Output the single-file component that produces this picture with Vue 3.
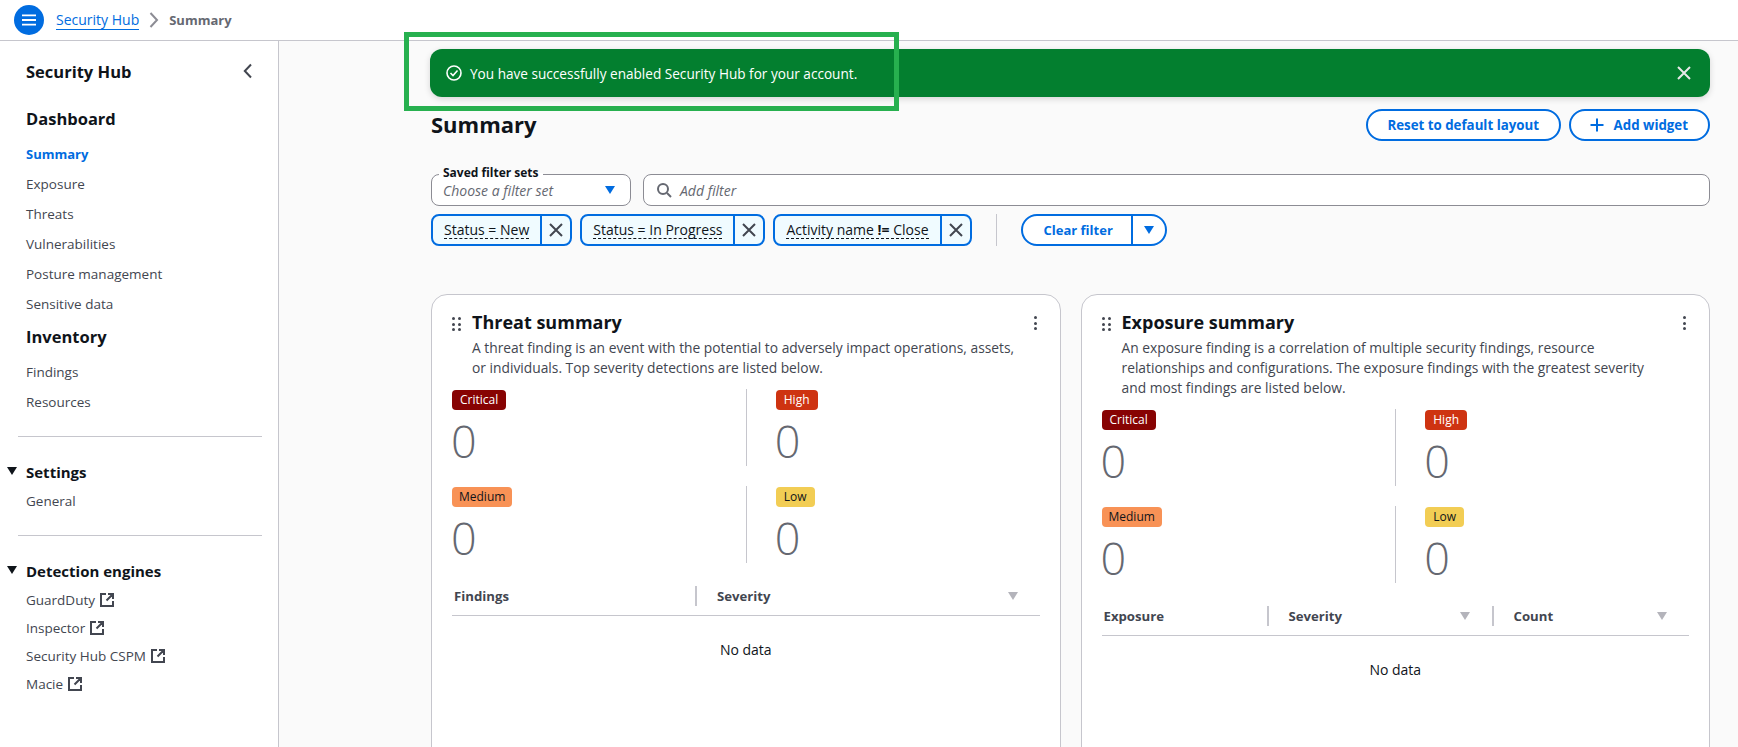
<template>
  <div class="page">
    <header class="topbar">
      <button class="menu-btn" aria-label="Menu">
        <svg width="16" height="16" viewBox="0 0 16 16"><path d="M1 3.3h14M1 8h14M1 12.700h14" stroke="#fff" stroke-width="1.8" fill="none"/></svg>
      </button>
      <a class="crumb">Security Hub</a>
      <svg class="crumb-sep" width="16" height="16" viewBox="0 0 16 16"><path d="M4.500 1 11 8l-6.500 7" stroke="#8c8c94" stroke-width="2" fill="none"/></svg>
      <span class="crumb-current">Summary</span>
    </header>

    <div class="body">
      <aside class="sidebar">
        <div class="side-head">
          <span>Security Hub</span>
          <svg width="16" height="16" viewBox="0 0 16 16"><path d="M11 1.500 4.800 8l6.200 6.500" stroke="#424650" stroke-width="2" fill="none"/></svg>
        </div>
        <h3 class="side-title">Dashboard</h3>
        <a v-for="item in dashboardLinks" :key="item" class="side-link" :class="{ active: item === 'Summary' }">{{ item }}</a>
        <h3 class="side-title second">Inventory</h3>
        <a v-for="item in inventoryLinks" :key="item" class="side-link">{{ item }}</a>
        <hr class="side-rule" />
        <div class="side-group"><span class="caret"></span>Settings</div>
        <a class="side-link">General</a>
        <hr class="side-rule" />
        <div class="side-group"><span class="caret"></span>Detection engines</div>
        <a v-for="item in engines" :key="item" class="side-link ext">
          {{ item }}
          <svg width="16" height="16" viewBox="0 0 16 16"><path d="M7 2H2v12h12V9M9 2h5v5M14 2 7.500 8.500" stroke="#424650" stroke-width="2" fill="none"/></svg>
        </a>
      </aside>

      <main class="content">
        <div class="flash">
          <svg width="16" height="16" viewBox="0 0 16 16"><circle cx="8" cy="8" r="7" stroke="#fff" stroke-width="1.6" fill="none"/><path d="m4.500 8 2.500 2.500 4.500-5" stroke="#fff" stroke-width="1.6" fill="none"/></svg>
          <span class="flash-text">You have successfully enabled Security Hub for your account.</span>
          <svg class="flash-close" width="16" height="16" viewBox="0 0 16 16"><path d="m2 2 12 12M14 2 2 14" stroke="#e8e8e8" stroke-width="2" fill="none"/></svg>
        </div>
        <div class="highlight"></div>

        <div class="title-row">
          <h1>Summary</h1>
          <div class="title-actions">
            <button class="pill-btn reset">Reset to default layout</button>
            <button class="pill-btn add">
              <svg width="16" height="16" viewBox="0 0 16 16"><path d="M1.500 8h13M8 1.500v13" stroke="#006ce0" stroke-width="2" fill="none"/></svg>
              Add widget
            </button>
          </div>
        </div>

        <div class="filter-row">
          <div class="saved-set">
            <span class="saved-label">Saved filter sets</span>
            <span class="placeholder">Choose a filter set</span>
            <span class="blue-caret"></span>
          </div>
          <div class="search">
            <svg width="16" height="16" viewBox="0 0 16 16"><circle cx="7" cy="7" r="5" stroke="#656871" stroke-width="2" fill="none"/><path d="m11 11 4 4" stroke="#656871" stroke-width="2" fill="none"/></svg>
            <span class="placeholder">Add filter</span>
          </div>
        </div>

        <div class="chips">
          <div v-for="chip in chips" :key="chip.name + chip.value" class="chip">
            <span class="chip-label"><span>{{ chip.name }} <b v-if="chip.op === '!='">{{ chip.op }}</b><template v-else>{{ chip.op }}</template> {{ chip.value }}</span></span>
            <span class="chip-x">
              <svg width="16" height="16" viewBox="0 0 16 16"><path d="m2 2 12 12M14 2 2 14" stroke="#424650" stroke-width="2" fill="none"/></svg>
            </span>
          </div>
          <span class="chip-divider"></span>
          <div class="split-btn">
            <span class="split-main">Clear filter</span>
            <span class="split-arrow"><span class="blue-caret"></span></span>
          </div>
        </div>

        <div class="widgets">
          <section v-for="w in widgets" :key="w.title" class="widget">
            <div class="widget-head">
              <span class="grip"><i v-for="n in 6" :key="n"></i></span>
              <div class="widget-heading">
                <h2>{{ w.title }}</h2>
                <p>{{ w.desc }}</p>
              </div>
              <span class="kebab"><i></i><i></i><i></i></span>
            </div>
            <div class="severity-grid">
              <div v-for="s in severities" :key="s.label" class="severity-cell">
                <span class="badge" :class="s.cls">{{ s.label }}</span>
                <div class="count">0</div>
              </div>
            </div>
            <div class="table-head">
              <div v-for="col in w.columns" :key="col.name" class="th" :class="col.cls">
                <span>{{ col.name }}</span>
                <span v-if="col.sort" class="sort"></span>
              </div>
            </div>
            <div class="no-data">No data</div>
          </section>
        </div>
      </main>
    </div>
  </div>
</template>

<script setup>
const dashboardLinks = ['Summary', 'Exposure', 'Threats', 'Vulnerabilities', 'Posture management', 'Sensitive data']
const inventoryLinks = ['Findings', 'Resources']
const engines = ['GuardDuty', 'Inspector', 'Security Hub CSPM', 'Macie']
const chips = [
  { name: 'Status', op: '=', value: 'New' },
  { name: 'Status', op: '=', value: 'In Progress' },
  { name: 'Activity name', op: '!=', value: 'Close' },
]
const severities = [
  { label: 'Critical', cls: 'critical' },
  { label: 'High', cls: 'high' },
  { label: 'Medium', cls: 'medium' },
  { label: 'Low', cls: 'low' },
]
const widgets = [
  {
    title: 'Threat summary',
    desc: 'A threat finding is an event with the potential to adversely impact operations, assets, or individuals. Top severity detections are listed below.',
    columns: [
      { name: 'Findings', cls: 'col-wide' },
      { name: 'Severity', cls: 'col-rest', sort: true },
    ],
  },
  {
    title: 'Exposure summary',
    desc: 'An exposure finding is a correlation of multiple security findings, resource relationships and configurations. The exposure findings with the greatest severity and most findings are listed below.',
    columns: [
      { name: 'Exposure', cls: 'col-a' },
      { name: 'Severity', cls: 'col-b', sort: true },
      { name: 'Count', cls: 'col-rest', sort: true },
    ],
  },
]
</script>

<style>
html, body {
  margin: 0;
  height: 100%;
  overflow: hidden;
  background: #fff;
}
</style>

<style scoped>
.page {
  height: 747px;
  overflow: hidden;
  font-family: "Open Sans", "Noto Sans", sans-serif;
  font-size: 14px;
  color: #0f141a;
}

.topbar {
  height: 40px;
  display: flex;
  align-items: center;
  padding-left: 14px;
  border-bottom: 1px solid #c6c6cd;
}
.menu-btn {
  width: 30px;
  height: 30px;
  border: 0;
  padding: 0;
  border-radius: 50%;
  background: #006ce0;
  display: flex;
  align-items: center;
  justify-content: center;
  margin-right: 12px;
}
.crumb {
  color: #006ce0;
  border-bottom: 1px solid #006ce0;
  line-height: 18px;
}
.crumb-sep {
  margin: 0 7.5px 0 6.5px;
}
.crumb-current {
  color: #656871;
  font-size: 13px;
  font-weight: 700;
}

.body {
  display: flex;
  height: 706px;
}

.sidebar {
  width: 279px;
  flex: none;
  box-sizing: border-box;
  border-right: 1px solid #c6c6cd;
  padding: 0 0 0 26px;
  background: #fff;
  display: flex;
  flex-direction: column;
  align-items: flex-start;
}
.side-head {
  width: 230px;
  margin-top: 18px;
  height: 24px;
  display: flex;
  justify-content: space-between;
  align-items: center;
  font-size: 16.5px;
  font-weight: 700;
}
.side-title {
  margin: 24px 0 0;
  font-size: 16.5px;
  line-height: 24px;
  font-weight: 700;
}
.side-title.second {
  margin-top: 11px;
}
.side-link {
  color: #424650;
  font-size: 13.5px;
  line-height: 20px;
  margin-top: 10px;
}
.side-title + .side-link {
  margin-top: 13px;
}
.side-link.active {
  color: #006ce0;
  font-size: 13px;
  font-weight: 700;
}
.side-link.ext {
  display: flex;
  align-items: center;
  gap: 4px;
  margin-top: 8px;
}
.side-rule {
  width: 244px;
  margin: 24px 0 0 -8px;
  border: 0;
  border-top: 1px solid #c6c6cd;
}
.side-group {
  position: relative;
  font-size: 15px;
  font-weight: 700;
  line-height: 22px;
  margin-top: 24px;
}
.side-group + .side-link {
  margin-top: 8px;
}
.caret {
  position: absolute;
  left: -19px;
  top: 6px;
  width: 0;
  height: 0;
  border-left: 5px solid transparent;
  border-right: 5px solid transparent;
  border-top: 8px solid #0f141a;
}

.content {
  position: relative;
  flex: 1;
  min-width: 0;
  background: #fafafa;
  padding: 8px 28px 0 152px;
  box-sizing: border-box;
}
.flash {
  height: 48px;
  box-sizing: border-box;
  display: flex;
  align-items: center;
  gap: 8px;
  margin-left: -1px;
  padding: 0 18px 0 16px;
  background: #037f2f;
  color: #fff;
  font-size: 13.6px;
  border-radius: 12px;
  box-shadow: 0 2px 6px rgba(0, 0, 0, 0.15);
}
.flash-text {
  flex: 1;
}
.highlight {
  position: absolute;
  left: 125px;
  top: -9px;
  width: 495px;
  height: 79px;
  border: 5px solid #27b04f;
  box-sizing: border-box;
  pointer-events: none;
}

.title-row {
  display: flex;
  justify-content: space-between;
  align-items: center;
  margin-top: 12px;
  height: 32px;
}
h1 {
  margin: -2px 0 0;
  font-size: 22px;
  line-height: 30px;
  font-weight: 700;
}
.title-actions {
  display: flex;
  gap: 8px;
}
.pill-btn {
  height: 32px;
  padding: 0 20px;
  border: 2px solid #006ce0;
  border-radius: 16px;
  background: #fff;
  color: #006ce0;
  font: 700 13.3px "Open Sans", "Noto Sans", sans-serif;
  display: flex;
  align-items: center;
  gap: 8px;
}
.pill-btn.reset {
  padding: 0 19.5px;
}
.pill-btn.add {
  padding-left: 18px;
  gap: 9px;
}

.filter-row {
  display: flex;
  gap: 12px;
  margin-top: 33px;
}
.saved-set {
  position: relative;
  width: 200px;
  height: 32px;
  box-sizing: border-box;
  border: 1px solid #8c8c94;
  border-radius: 8px;
  background: #fff;
  display: flex;
  align-items: center;
  justify-content: space-between;
  padding: 0 15px 0 11px;
}
.saved-label {
  position: absolute;
  left: 7px;
  top: -10px;
  padding: 0 4px;
  font-size: 12px;
  line-height: 16px;
  font-weight: 700;
  background: linear-gradient(#fafafa 50%, #fff 50%);
}
.placeholder {
  font-style: italic;
  color: #656871;
}
.search {
  flex: 1;
  height: 32px;
  box-sizing: border-box;
  border: 1px solid #8c8c94;
  border-radius: 8px;
  background: #fff;
  display: flex;
  align-items: center;
  gap: 8px;
  padding: 0 12px;
}
.blue-caret {
  width: 0;
  height: 0;
  border-left: 5.5px solid transparent;
  border-right: 5.5px solid transparent;
  border-top: 8px solid #006ce0;
}

.chips {
  display: flex;
  align-items: center;
  gap: 8px;
  margin-top: 8px;
}
.chip {
  display: flex;
  height: 32px;
  box-sizing: border-box;
  border: 2px solid #006ce0;
  border-radius: 8px;
  background: #f0fbff;
  overflow: hidden;
}
.chip-label {
  padding: 0 11px;
  display: flex;
  align-items: center;
}
.chip-label span {
  border-bottom: 1px dashed #0f141a;
  line-height: 17px;
}
.chip-x {
  width: 28px;
  display: flex;
  align-items: center;
  justify-content: center;
  border-left: 2px solid #006ce0;
}
.chip-divider {
  width: 1px;
  height: 32px;
  background: #c6c6cd;
  margin: 0 16px;
}
.split-btn {
  display: flex;
  height: 32px;
  box-sizing: border-box;
  border: 2px solid #006ce0;
  border-radius: 16px;
  background: #fff;
  color: #006ce0;
  font-size: 13px;
  font-weight: 700;
}
.split-main {
  padding: 0 18px 0 21px;
  display: flex;
  align-items: center;
  border-right: 2px solid #006ce0;
}
.split-arrow {
  width: 32px;
  display: flex;
  align-items: center;
  justify-content: center;
}

.widgets {
  display: grid;
  grid-template-columns: 1fr 1fr;
  gap: 20px;
  margin-top: 48px;
}
.widget {
  height: 500px;
  box-sizing: border-box;
  border: 1px solid #c6c6cd;
  border-radius: 16px;
  background: #fff;
  padding: 15px 20px;
}
.widget-head {
  display: flex;
  align-items: flex-start;
}
.grip {
  width: 10px;
  display: grid;
  grid-template-columns: 3px 3px;
  gap: 2.5px 3px;
  margin: 7px 10px 0 0;
  flex: none;
  height: 14px;
}
.grip i {
  width: 3px;
  height: 3px;
  border-radius: 50%;
  background: #424650;
}
.widget-heading {
  flex: 1;
}
h2 {
  margin: 0;
  font-size: 18px;
  line-height: 24px;
  font-weight: 700;
}
p {
  margin: 4px 0 0;
  max-width: 546px;
  color: #424650;
  font-size: 13.8px;
  line-height: 20px;
}
.kebab {
  display: flex;
  flex-direction: column;
  gap: 2.5px;
  margin: 6px 3px 0 0;
}
.kebab i {
  width: 3px;
  height: 3px;
  border-radius: 50%;
  background: #424650;
}
.severity-grid {
  display: grid;
  grid-template-columns: 1fr 1fr;
  margin-top: 11px;
  row-gap: 20px;
}
.severity-cell {
  height: 77px;
  display: flex;
  flex-direction: column;
  align-items: flex-start;
}
.severity-cell:nth-child(even) {
  border-left: 1px solid #c6c6cd;
  padding-left: 29px;
}
.badge {
  margin-top: 1px;
  padding: 0 8px;
  border-radius: 4px;
  font-size: 12px;
  line-height: 20px;
}
.badge.critical { background: #870303; color: #fff; }
.badge.high { background: #ce3311; color: #fff; }
.badge.medium { background: #f89256; color: #0f141a; padding: 0 7px; }
.badge.low { background: #f2cd54; color: #0f141a; }
.count {
  margin: 5px 0 0 -1px;
  font-size: 45px;
  line-height: 51px;
  color: #656871;
  font-weight: 300;
}
.table-head {
  display: flex;
  box-sizing: border-box;
  border-bottom: 1px solid #c6c6cd;
  margin-top: 19px;
  height: 34px;
  color: #424650;
  font-size: 13.2px;
  font-weight: 700;
}
.th {
  display: flex;
  justify-content: space-between;
  align-items: center;
  box-sizing: border-box;
  height: 20px;
  margin-top: 4px;
  padding: 0 22px 0 2px;
}
.th + .th {
  border-left: 2px solid #c6c6cd;
  padding-left: 20px;
}
.col-wide { width: 243px; }
.col-a { width: 165px; }
.col-b { width: 225px; }
.col-rest { flex: 1; }
.sort {
  width: 0;
  height: 0;
  border-left: 5.5px solid transparent;
  border-right: 5.5px solid transparent;
  border-top: 8px solid #b4b4bb;
}
.no-data {
  text-align: center;
  margin-top: 24px;
  line-height: 20px;
}
</style>
